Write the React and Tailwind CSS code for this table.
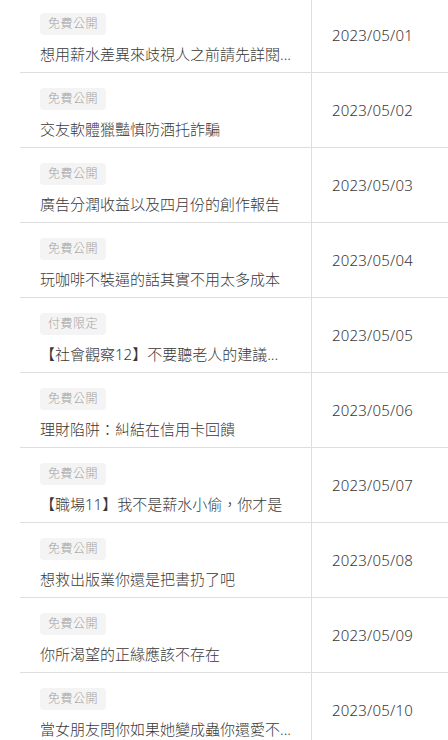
import React from "react";

const posts = [
  { tag: "免費公開", title: "想用薪水差異來歧視人之前請先詳閱...", date: "2023/05/01" },
  { tag: "免費公開", title: "交友軟體獵豔慎防酒托詐騙", date: "2023/05/02" },
  { tag: "免費公開", title: "廣告分潤收益以及四月份的創作報告", date: "2023/05/03" },
  { tag: "免費公開", title: "玩咖啡不裝逼的話其實不用太多成本", date: "2023/05/04" },
  { tag: "付費限定", title: "【社會觀察12】不要聽老人的建議...", date: "2023/05/05" },
  { tag: "免費公開", title: "理財陷阱：糾結在信用卡回饋", date: "2023/05/06" },
  { tag: "免費公開", title: "【職場11】我不是薪水小偷，你才是", date: "2023/05/07" },
  { tag: "免費公開", title: "想救出版業你還是把書扔了吧", date: "2023/05/08" },
  { tag: "免費公開", title: "你所渴望的正緣應該不存在", date: "2023/05/09" },
  { tag: "免費公開", title: "當女朋友問你如果她變成蟲你還愛不...", date: "2023/05/10" },
];

const App = () => {
  return (
    <div
      className="min-h-[740px] bg-white overflow-hidden pl-[20px] font-light"
      style={{ fontFamily: '"Noto Sans", "Noto Sans CJK TC", sans-serif' }}
    >
      <div className="mt-[-2px]">
        {posts.map((post, index) => (
          <div key={index} className="flex border-b border-[#dedede] h-[75px]">
            {/* title cell */}
            <div className="w-[292px] shrink-0 border-r border-[#dedede] pl-[20px] pr-[8px] pt-[12px]">
              <span className="inline-flex items-center h-[22px] px-[8px] rounded-[4px] bg-[#f4f4f4] text-[12px] tracking-[0.5px] text-[#a3a3a3]">
                {post.tag}
              </span>
              <p className="mt-[8px] leading-[22px] text-[15px] text-[#383838] whitespace-nowrap overflow-hidden">
                {post.title}
              </p>
            </div>
            {/* date cell */}
            <div className="flex-1 flex items-center pl-[20px] text-[15px] tracking-[0.2px] text-[#383838]">
              {post.date}
            </div>
          </div>
        ))}
      </div>
    </div>
  );
};

export default App;
